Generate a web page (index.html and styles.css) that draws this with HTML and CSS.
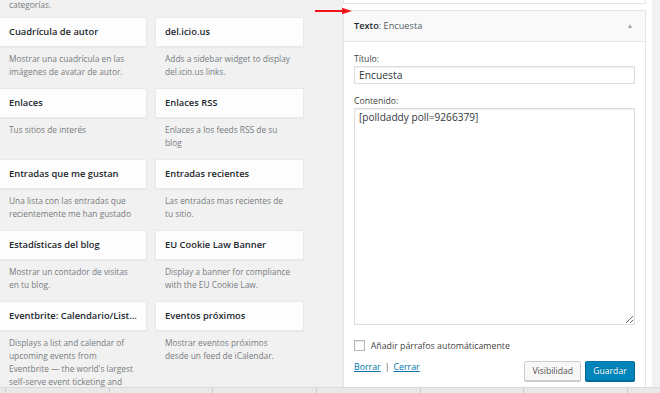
FILE: index.html
```html
<!DOCTYPE html>
<html lang="es">
<head>
<meta charset="utf-8">
<title>Widgets</title>
<link rel="stylesheet" href="styles.css">
</head>
<body>
<div class="page">
  <div class="main">
    <section class="available">
      <div class="desc lead">categorías.</div>
      <div class="grid">
        <div class="item"><div class="card">Cuadrícula de autor</div><div class="desc">Mostrar una cuadrícula en las imágenes de avatar de autor.</div></div>
        <div class="item"><div class="card">del.icio.us</div><div class="desc">Adds a sidebar widget to display del.icio.us links.</div></div>
        <div class="item"><div class="card">Enlaces</div><div class="desc">Tus sitios de interés</div></div>
        <div class="item"><div class="card">Enlaces RSS</div><div class="desc">Enlaces a los feeds RSS de su blog</div></div>
        <div class="item"><div class="card">Entradas que me gustan</div><div class="desc">Una lista con las entradas que recientemente me han gustado</div></div>
        <div class="item"><div class="card">Entradas recientes</div><div class="desc">Las entradas mas recientes de tu sitio.</div></div>
        <div class="item"><div class="card">Estadísticas del blog</div><div class="desc">Mostrar un contador de visitas en tu blog.</div></div>
        <div class="item"><div class="card">EU Cookie Law Banner</div><div class="desc">Display a banner for compliance with the EU Cookie Law.</div></div>
        <div class="item"><div class="card">Eventbrite: Calendario/List...</div><div class="desc">Displays a list and calendar of upcoming events from Eventbrite — the world's largest self-serve event ticketing and</div></div>
        <div class="item"><div class="card">Eventos próximos</div><div class="desc">Mostrar eventos próximos desde un feed de iCalendar.</div></div>
      </div>
    </section>
    <aside class="sidebar">
      <div class="widget-partial"></div>
      <div class="widget">
        <div class="widget-top">
          <h3 class="widget-title"><strong>Texto</strong><span class="in-title">: Encuesta</span></h3>
          <span class="toggle"></span>
        </div>
        <div class="widget-inside">
          <label class="field-label">Título:</label>
          <input class="text-input" type="text" value="Encuesta">
          <label class="field-label spaced">Contenido:</label>
          <textarea class="text-area">[polldaddy poll=9266379]</textarea>
          <label class="check-row"><span class="checkbox"></span><span>Añadir párrafos automáticamente</span></label>
          <div class="controls">
            <div class="links"><a href="#">Borrar</a><span class="sep">|</span><a href="#">Cerrar</a></div>
            <div class="buttons">
              <button class="btn">Visibilidad</button>
              <button class="btn primary">Guardar</button>
            </div>
          </div>
        </div>
      </div>
    </aside>
    <div class="gutter"></div>
  </div>
  <div class="strip">
    <span class="cell first"></span>
    <span class="cell"></span>
    <span class="cell"></span>
    <span class="cell"></span>
    <span class="cell"></span>
    <span class="cell"></span>
    <span class="cell"></span>
    <span class="cell last"></span>
  </div>
  <svg class="arrow" width="44" height="12" viewBox="0 0 44 12" aria-hidden="true">
    <line x1="2" y1="5" x2="33" y2="5" stroke="#f0141a" stroke-width="2"/>
    <polygon points="29,1.8 39,5 29,8.2" fill="#f0141a"/>
  </svg>
</div>
</body>
</html>
```
FILE: styles.css
```css
* { box-sizing: border-box; }

html, body {
  margin: 0;
  padding: 0;
}

body {
  background: #f1f1f1;
  font-family: "Open Sans", "Liberation Sans", sans-serif;
  color: #23282d;
  width: 660px;
  height: 393px;
  overflow: hidden;
}

.page {
  position: relative;
  width: 660px;
  height: 393px;
  display: flex;
  flex-direction: column;
}

.main {
  display: flex;
  height: 387px;
  overflow: hidden;
}

/* left: available widgets */
.available {
  width: 343px;
  flex: 0 0 343px;
}

.desc {
  font-size: 8.35px;
  line-height: 12.7px;
  color: #777c80;
  padding: 6.2px 12.5px 8.5px 10px;
}

.desc.lead {
  margin-top: -1.3px;
  padding: 0 9px 5.3px;
}

.grid {
  margin-left: -1px;
  display: grid;
  grid-template-columns: 148px 149px;
  grid-auto-rows: 71px;
  column-gap: 8px;
}

.card {
  height: 30.6px;
  background: #fdfdfd;
  border: 1px solid #e9e9e9;
  box-shadow: 0 1px 1px rgba(0, 0, 0, 0.03);
  padding: 0 9px;
  font-size: 9.35px;
  font-weight: 600;
  line-height: 28.6px;
  white-space: nowrap;
  overflow: hidden;
  color: #23282d;
}

/* right: sidebar */
.sidebar {
  width: 309px;
  flex: 0 0 309px;
  background: #fff;
  padding-right: 6px;
}

.widget-partial {
  height: 4px;
  border: 1px solid #e5e5e5;
  border-top: none;
  margin-bottom: 6px;
}

.widget {
  border: 1px solid #e5e5e5;
  box-shadow: 0 1px 1px rgba(0, 0, 0, 0.04);
  height: 400px;
}

.widget-top {
  height: 31px;
  background: #f9f9f9;
  border-bottom: 1px solid #e5e5e5;
  display: flex;
  align-items: center;
  justify-content: space-between;
  padding: 0 13px 0 10px;
}

.widget-title {
  margin: 0;
  font-size: 9.2px;
  font-weight: 600;
  color: #23282d;
  line-height: 12px;
}

.widget-title strong {
  font-weight: 600;
}

.in-title {
  font-weight: 400;
  color: #555d66;
}

.toggle {
  width: 0;
  height: 0;
  border-left: 2.7px solid transparent;
  border-right: 2.7px solid transparent;
  border-bottom: 4px solid #a0a5aa;
}

.widget-inside {
  padding: 11px 10px 0;
}

.field-label {
  display: block;
  font-size: 8.7px;
  line-height: 12.7px;
  color: #444;
}

.field-label.spaced {
  margin-top: 10.3px;
}

.text-input {
  display: block;
  width: 100%;
  height: 18.3px;
  margin: 0.3px 0 0;
  padding: 0 4px;
  border: 1px solid #ddd;
  box-shadow: inset 0 1px 2px rgba(0, 0, 0, 0.07);
  font-family: "Open Sans", "Liberation Sans", sans-serif;
  font-size: 10.3px;
  color: #32373c;
  background: #fff;
  outline: none;
  border-radius: 0;
}

.text-area {
  display: block;
  width: 100%;
  height: 217.3px;
  margin: 0.4px 0 0;
  padding: 2.5px 4px;
  border: 1px solid #ddd;
  box-shadow: inset 0 1px 2px rgba(0, 0, 0, 0.07);
  font-family: "Open Sans", "Liberation Sans", sans-serif;
  font-size: 10.1px;
  line-height: 12px;
  color: #32373c;
  background: #fff;
  resize: vertical;
  outline: none;
  border-radius: 0;
}

.check-row {
  margin-top: 14.7px;
  display: flex;
  align-items: center;
  gap: 5.4px;
  font-size: 8.8px;
  line-height: 12px;
  color: #444;
}

.checkbox {
  width: 11.3px;
  height: 11.3px;
  border: 1px solid #b4b9be;
  background: #fff;
  box-shadow: inset 0 1px 2px rgba(0, 0, 0, 0.1);
  flex: 0 0 auto;
}

.controls {
  margin-top: 9.7px;
  display: flex;
  justify-content: space-between;
  align-items: flex-start;
}

.links {
  font-size: 8.8px;
  line-height: 12.7px;
  color: #555;
}

.links a {
  color: #0073aa;
  text-decoration: underline;
}

.sep {
  margin: 0 4px;
}

.buttons {
  display: flex;
  gap: 4px;
}

.btn {
  height: 19.4px;
  padding: 0 7px;
  border: 1px solid #ccc;
  border-radius: 2px;
  background: #f7f7f7;
  box-shadow: 0 1px 0 #ccc;
  font-family: "Open Sans", "Liberation Sans", sans-serif;
  font-size: 8.6px;
  line-height: 17px;
  color: #555;
  cursor: pointer;
}

.btn.primary {
  width: 50px;
  background: #0085ba;
  border-color: #0073aa #006799 #006799;
  box-shadow: 0 1px 0 #006799;
  color: #fff;
  text-shadow: 0 -1px 1px #006799;
}

.gutter {
  flex: 1 1 auto;
  background: #f1f1f1;
}

/* bottom strip */
.strip {
  height: 6px;
  display: flex;
  background: #e9e9e9;
  border-top: 1px solid #d9d9d9;
}

.cell {
  flex: 0 0 103.7px;
  border-left: 1px solid #c9c9c9;
}

.cell.first {
  flex: 0 0 5px;
  border-left: none;
}

.cell.last {
  flex: 1 1 auto;
}

/* annotation arrow overlay */
.arrow {
  position: absolute;
  left: 313px;
  top: 6px;
}
```
